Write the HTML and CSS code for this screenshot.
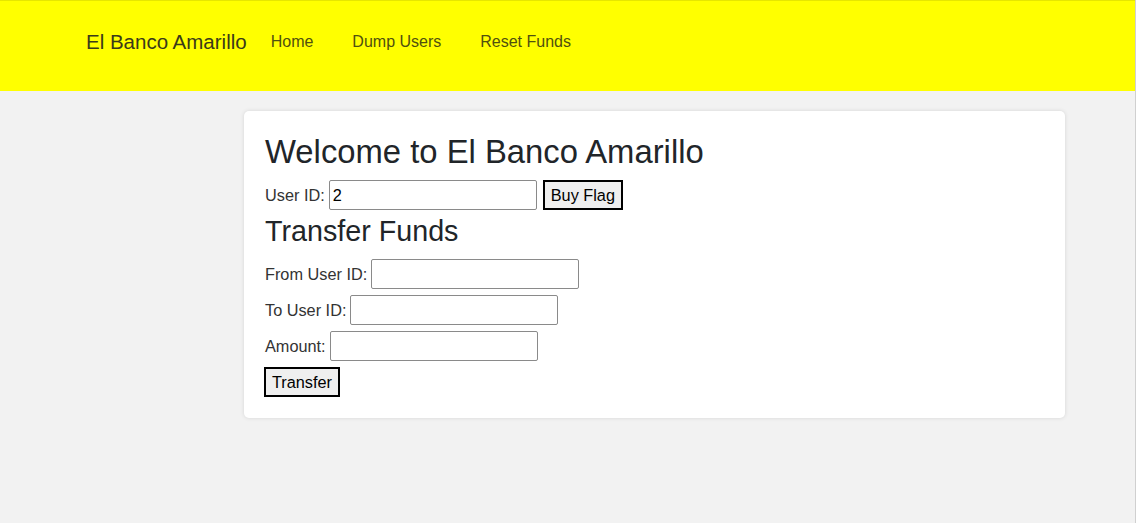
FILE: index.html
```html
<!DOCTYPE html>
<html>
<head>
<meta charset="utf-8">
<title>El Banco Amarillo</title>
<link rel="stylesheet" href="styles.css">
</head>
<body>
<nav class="navbar">
  <a class="brand" href="#">El Banco Amarillo</a>
  <ul class="nav-links">
    <li><a href="#">Home</a></li>
    <li><a href="#">Dump Users</a></li>
    <li><a href="#">Reset Funds</a></li>
  </ul>
</nav>
<main class="card">
  <h1 class="title">Welcome to El Banco Amarillo</h1>
  <div class="row">
    <label>User ID:</label>
    <input type="text" class="field" value="2">
    <button class="btn">Buy Flag</button>
  </div>
  <h2 class="subtitle">Transfer Funds</h2>
  <div class="row">
    <label>From User ID:</label>
    <input type="text" class="field">
  </div>
  <div class="row">
    <label>To User ID:</label>
    <input type="text" class="field">
  </div>
  <div class="row">
    <label>Amount:</label>
    <input type="text" class="field">
  </div>
  <div class="row">
    <button class="btn">Transfer</button>
  </div>
</main>
</body>
</html>
```
FILE: styles.css
```css
* { box-sizing: border-box; }
html, body { margin: 0; padding: 0; }
body {
  background: #f2f2f2;
  font-family: "Liberation Sans", Arial, sans-serif;
  color: #212529;
  height: 523px;
  overflow: hidden;
  border-right: 1px solid #d0d0d0;
}
.navbar {
  background: #ffff00;
  border-top: 1px solid #e6e600;
  height: 91px;
  display: flex;
  align-items: center;
  padding: 0 0 8px 86px;
}
.brand {
  font-size: 20.5px;
  color: #3a3a1a;
  text-decoration: none;
  margin-right: 24px;
}
.nav-links {
  list-style: none;
  display: flex;
  gap: 39px;
  margin: 0;
  padding: 0;
}
.nav-links a {
  font-size: 16px;
  color: #50500f;
  text-decoration: none;
}
.card {
  margin: 20px 0 0 244px;
  width: 821px;
  background: #fff;
  border-radius: 5px;
  box-shadow: 0 0 4px rgba(0,0,0,0.12);
  padding: 22px 20px 21px 21px;
}
.title {
  font-size: 32.8px;
  font-weight: normal;
  margin: 0 0 9px;
  line-height: 38px;
}
.subtitle {
  font-size: 28.7px;
  font-weight: normal;
  margin: 6px 0 13px;
  line-height: 30px;
}
.row {
  display: flex;
  align-items: center;
  gap: 4px;
  margin-bottom: 6px;
}
.row:last-child { margin-bottom: 0; }
label {
  font-size: 16.3px;
  color: #333;
}
.field {
  width: 208px;
  height: 30px;
  border: 1px solid #8a8a8a;
  border-radius: 2px;
  font-family: inherit;
  font-size: 16.3px;
  padding: 1px 3px;
  color: #000;
}
.btn {
  height: 30px;
  font-family: inherit;
  font-size: 16.3px;
  background: #efefef;
  border: 2px solid #000;
  border-radius: 0;
  padding: 0 6px;
  color: #000;
  margin-left: 2px;
}
.row > .btn:first-child { margin-left: -1px; }
```
